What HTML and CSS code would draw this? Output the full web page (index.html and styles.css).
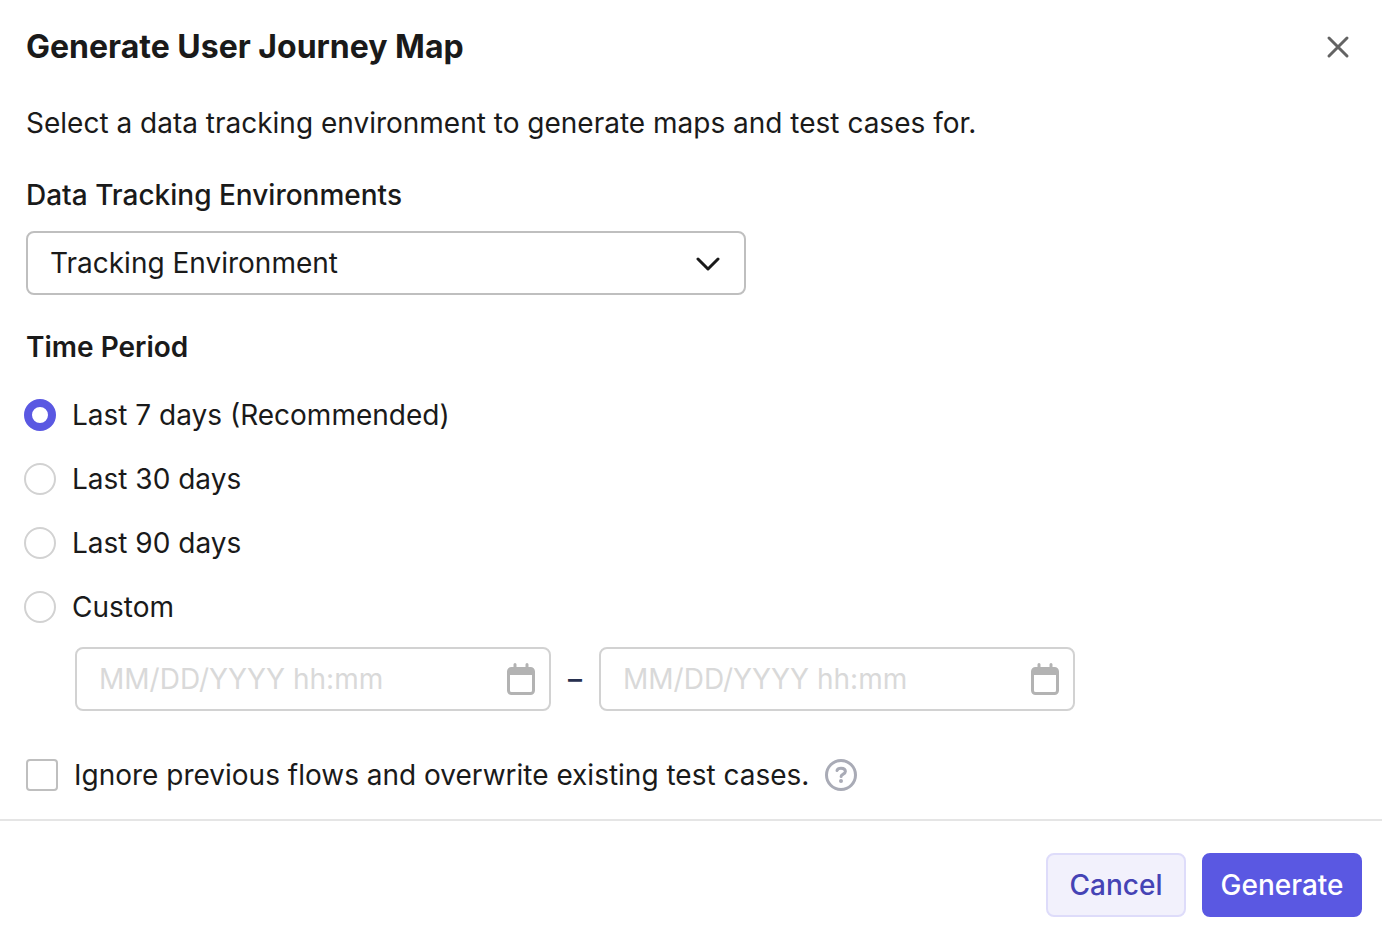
FILE: index.html
```html
<!DOCTYPE html>
<html lang="en">
<head>
    <meta charset="UTF-8">
    <meta name="viewport" content="width=device-width, initial-scale=1.0">
    <title>Generate User Journey Map</title>
    <link rel="stylesheet" href="styles.css">
</head>
<body>
    <form class="modal" role="dialog" aria-labelledby="modal-title">
        <header class="modal-header">
            <h1 id="modal-title">Generate User Journey Map</h1>
            <button type="button" class="close" aria-label="Close">
                <svg width="24" height="24" viewBox="0 0 24 24" fill="none" stroke="#636363" stroke-width="3" stroke-linecap="round">
                    <path d="M3 3l18 18M21 3L3 21"/>
                </svg>
            </button>
        </header>

        <div class="modal-body">
            <p class="intro">Select a data tracking environment to generate maps and test cases for.</p>

            <label class="field-label" for="environment">Data Tracking Environments</label>
            <div class="select-box">
                <select id="environment">
                    <option>Tracking Environment</option>
                </select>
                <svg class="chevron" width="24" height="16" viewBox="0 0 24 16" fill="none" stroke="#1a1a1a" stroke-width="3" stroke-linecap="round" stroke-linejoin="round">
                    <path d="M2 3l10 10L22 3"/>
                </svg>
            </div>

            <fieldset class="period">
                <legend>Time Period</legend>
                <label class="option"><input type="radio" name="period" checked>Last 7 days (Recommended)</label>
                <label class="option"><input type="radio" name="period">Last 30 days</label>
                <label class="option"><input type="radio" name="period">Last 90 days</label>
                <label class="option"><input type="radio" name="period">Custom</label>
                <div class="range">
                    <div class="date-box">
                        <input type="text" placeholder="MM/DD/YYYY hh:mm" aria-label="Start date">
                        <svg width="28" height="32" viewBox="0 0 28 32" fill="none" stroke="#b3b3b3">
                            <path d="M8 1.5v5M20 1.5v5" stroke-width="3" stroke-linecap="round"/>
                            <rect x="1.5" y="5.5" width="25" height="25" rx="3" stroke-width="3"/>
                            <path d="M2 8.5h24" stroke-width="7"/>
                        </svg>
                    </div>
                    <span class="dash">–</span>
                    <div class="date-box">
                        <input type="text" placeholder="MM/DD/YYYY hh:mm" aria-label="End date">
                        <svg width="28" height="32" viewBox="0 0 28 32" fill="none" stroke="#b3b3b3">
                            <path d="M8 1.5v5M20 1.5v5" stroke-width="3" stroke-linecap="round"/>
                            <rect x="1.5" y="5.5" width="25" height="25" rx="3" stroke-width="3"/>
                            <path d="M2 8.5h24" stroke-width="7"/>
                        </svg>
                    </div>
                </div>
            </fieldset>

            <div class="overwrite">
                <label class="option"><input type="checkbox">Ignore previous flows and overwrite existing test cases.</label>
                <button type="button" class="help" aria-label="Help">
                    <svg width="32" height="32" viewBox="0 0 32 32" fill="none" stroke="#a9abb6" stroke-width="3" stroke-linecap="round">
                        <circle cx="16" cy="16" r="14.5"/>
                        <path d="M12 11.5c.5-1.500 2-2.200 4-2.200 2.600 0 4.400 1.200 4.400 3.200 0 2.700-4.300 2.500-4.300 5"/>
                        <circle cx="16" cy="22" r="2" fill="#a9abb6" stroke="none"/>
                    </svg>
                </button>
            </div>
        </div>

        <footer class="modal-footer">
            <button type="button" class="btn btn-cancel">Cancel</button>
            <button type="submit" class="btn btn-primary">Generate</button>
        </footer>
    </form>
</body>
</html>
```
FILE: styles.css
```css
* {
    box-sizing: border-box;
}
body {
    margin: 0;
    background-color: #fff;
    color: #1a1a1a;
    font-family: Inter, "Liberation Sans", sans-serif;
    font-size: 28px;
    line-height: 32px;
}
button, input, select {
    font: inherit;
    color: inherit;
    margin: 0;
}
svg {
    display: block;
    flex: none;
}
.modal-header {
    display: flex;
    justify-content: space-between;
    align-items: center;
    padding: 27px 32px 0 26px;
}
h1 {
    margin: 0;
    font-size: 32px;
    font-weight: 700;
    line-height: 40px;
}
.close, .help {
    padding: 0;
    border: none;
    background: none;
    cursor: pointer;
}
.modal-body {
    padding: 40px 24px 28px 26px;
}
.intro {
    margin: 0 0 40px;
}
.field-label {
    display: block;
    margin-bottom: 20px;
    font-weight: 500;
}
.select-box {
    position: relative;
    max-width: 720px;
}
.select-box select {
    display: block;
    width: 100%;
    height: 64px;
    padding: 0 64px 0 22px;
    border: 2px solid #bfbfbf;
    border-radius: 8px;
    background-color: #fff;
    appearance: none;
}
/* drawn over the select in place of the native arrow */
.chevron {
    position: absolute;
    top: 25px;
    right: 26px;
    pointer-events: none;
}
.period {
    min-width: 0;
    margin: 36px 0 48px;
    padding: 0;
    border: none;
}
legend {
    padding: 0;
    margin-bottom: 36px;
    font-weight: 600;
}
.option {
    display: flex;
    align-items: center;
    gap: 16px;
}
.period .option {
    margin: 0 0 32px -2px;
}
.option input {
    flex: none;
    width: 32px;
    height: 32px;
    border: 2px solid #d2d2d2;
    background-color: #fff;
    appearance: none;
}
.option input[type="radio"] {
    border-radius: 50%;
}
.option input[type="radio"]:checked {
    border: 8px solid #5a58e2;
}
.option input[type="checkbox"] {
    border-color: #bfbfbf;
    border-radius: 4px;
}
.period .range {
    display: flex;
    align-items: center;
    gap: 16px;
    max-width: 1049px;
    margin-top: -8px;
    padding-left: 49px;
}
.date-box {
    display: flex;
    flex: 1;
    align-items: center;
    min-width: 0;
    height: 64px;
    padding: 0 14px 0 22px;
    border: 2px solid #d2d2d2;
    border-radius: 8px;
}
.date-box input {
    flex: 1;
    min-width: 0;
    padding: 0;
    border: none;
    background: none;
}
.date-box input::placeholder {
    color: #d9d9d9;
    opacity: 1;
}
.dash {
    flex: none;
    width: 16px;
    color: #27304f;
    font-weight: 500;
    text-align: center;
}
.overwrite {
    display: flex;
    align-items: center;
    gap: 16px;
}
.modal-footer {
    display: flex;
    justify-content: flex-end;
    gap: 16px;
    padding: 32px 20px 24px;
    border-top: 2px solid #e5e5e5;
}
.btn {
    height: 64px;
    padding: 0 16px;
    border: 2px solid transparent;
    border-radius: 8px;
    font-weight: 500;
    cursor: pointer;
}
.btn-cancel {
    min-width: 140px;
    border-color: #dedcfa;
    background-color: #f2f1fc;
    color: #4543b5;
}
.btn-primary {
    min-width: 160px;
    border-color: #5a58e2;
    background-color: #5a58e2;
    color: #fff;
}
```
